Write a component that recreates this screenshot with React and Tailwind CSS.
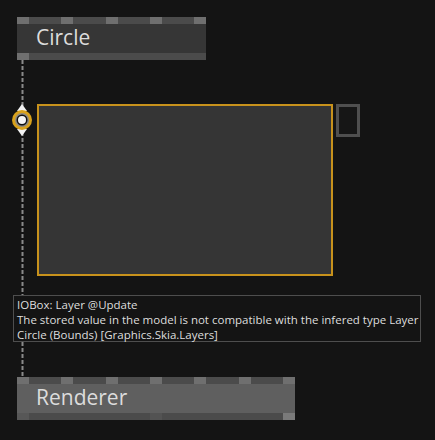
import React from "react";

function Pins({ count, color = "bg-[#6f6f6f]" }) {
  return (
    <div className="flex justify-between h-[7px] bg-[#4b4b4b]">
      {Array.from({ length: count }).map((_, i) => (
        <div key={i} className={`w-[12px] h-full ${color}`} />
      ))}
    </div>
  );
}

function Node({ label, width, pins, body, bottom }) {
  return (
    <div className={`flex flex-col ${width}`}>
      <Pins count={pins} />
      <div className={`h-[29px] ${body} flex items-center pl-[19px] text-[21px] leading-none text-[#dcdcdc]`}>
        <span className="-mt-[2px]">{label}</span>
      </div>
      <div className="flex justify-between h-[7px] bg-[#4b4b4b]">{bottom}</div>
    </div>
  );
}

function IoPin() {
  return (
    <svg width="24" height="34" viewBox="0 0 24 34" className="shrink-0">
      <path d="M7 8 L12 1 L17 8 Z" fill="#f2f2f2" />
      <path d="M7 26 L12 33 L17 26 Z" fill="#f2f2f2" />
      <circle cx="12" cy="17" r="10" fill="#d9a21b" />
      <circle cx="12" cy="17" r="7" fill="#8d8a84" />
      <circle cx="12" cy="17" r="5.5" fill="#111" />
      <circle cx="12" cy="17" r="4" fill="#f5f5f5" />
    </svg>
  );
}

export default function App() {
  return (
    <div className="relative w-[435px] h-[440px] bg-[#141414] overflow-hidden" style={{ fontFamily: '"Open Sans", sans-serif' }}>
      <svg className="absolute left-0 top-0" width="435" height="440">
        <line x1="22.5" y1="60" x2="22.5" y2="377" stroke="#8a8a8a" strokeWidth="2" strokeDasharray="4 2" />
      </svg>

      <div className="relative flex flex-col pt-[17px]">
        <div className="ml-[17px]">
          <Node
            label="Circle"
            width="w-[189px]"
            pins={5}
            body="bg-[#363636]"
            bottom={<div className="w-[12px] h-full bg-[#6f6f6f]" />}
          />
        </div>

        <div className="flex items-start mt-[44px] ml-[10px]">
          <div className="-mt-[1px]">
            <IoPin />
          </div>
          <div className="ml-[3px] w-[296px] h-[172px] border-2 border-[#c8921c] bg-[#353535]" />
          <div className="ml-[3px] w-[24px] h-[33px] border-[3px] border-[#4f4f4f] bg-[#161616]" />
        </div>

        <div className="mt-[19px] ml-[13px] w-[408px] h-[47px] border border-[#4e4e4e] bg-[#141414] pl-[3px] pt-[1px] text-[11.5px] leading-[15px] text-[#dedede] whitespace-nowrap">
          <div>IOBox: Layer @Update</div>
          <div>The stored value in the model is not compatible with the infered type Layer</div>
          <div>Circle (Bounds) [Graphics.Skia.Layers]</div>
        </div>

        <div className="mt-[35px] ml-[17px]">
          <Node
            label="Renderer"
            width="w-[278px]"
            pins={7}
            body="bg-[#5f5f5f]"
            bottom={
              <>
                <div className="w-[12px] h-full bg-[#575757]" />
                <div className="w-[12px] h-full bg-[#535353]" />
                <div className="w-[12px] h-full bg-[#7a7a7a]" />
              </>
            }
          />
        </div>
      </div>
    </div>
  );
}
